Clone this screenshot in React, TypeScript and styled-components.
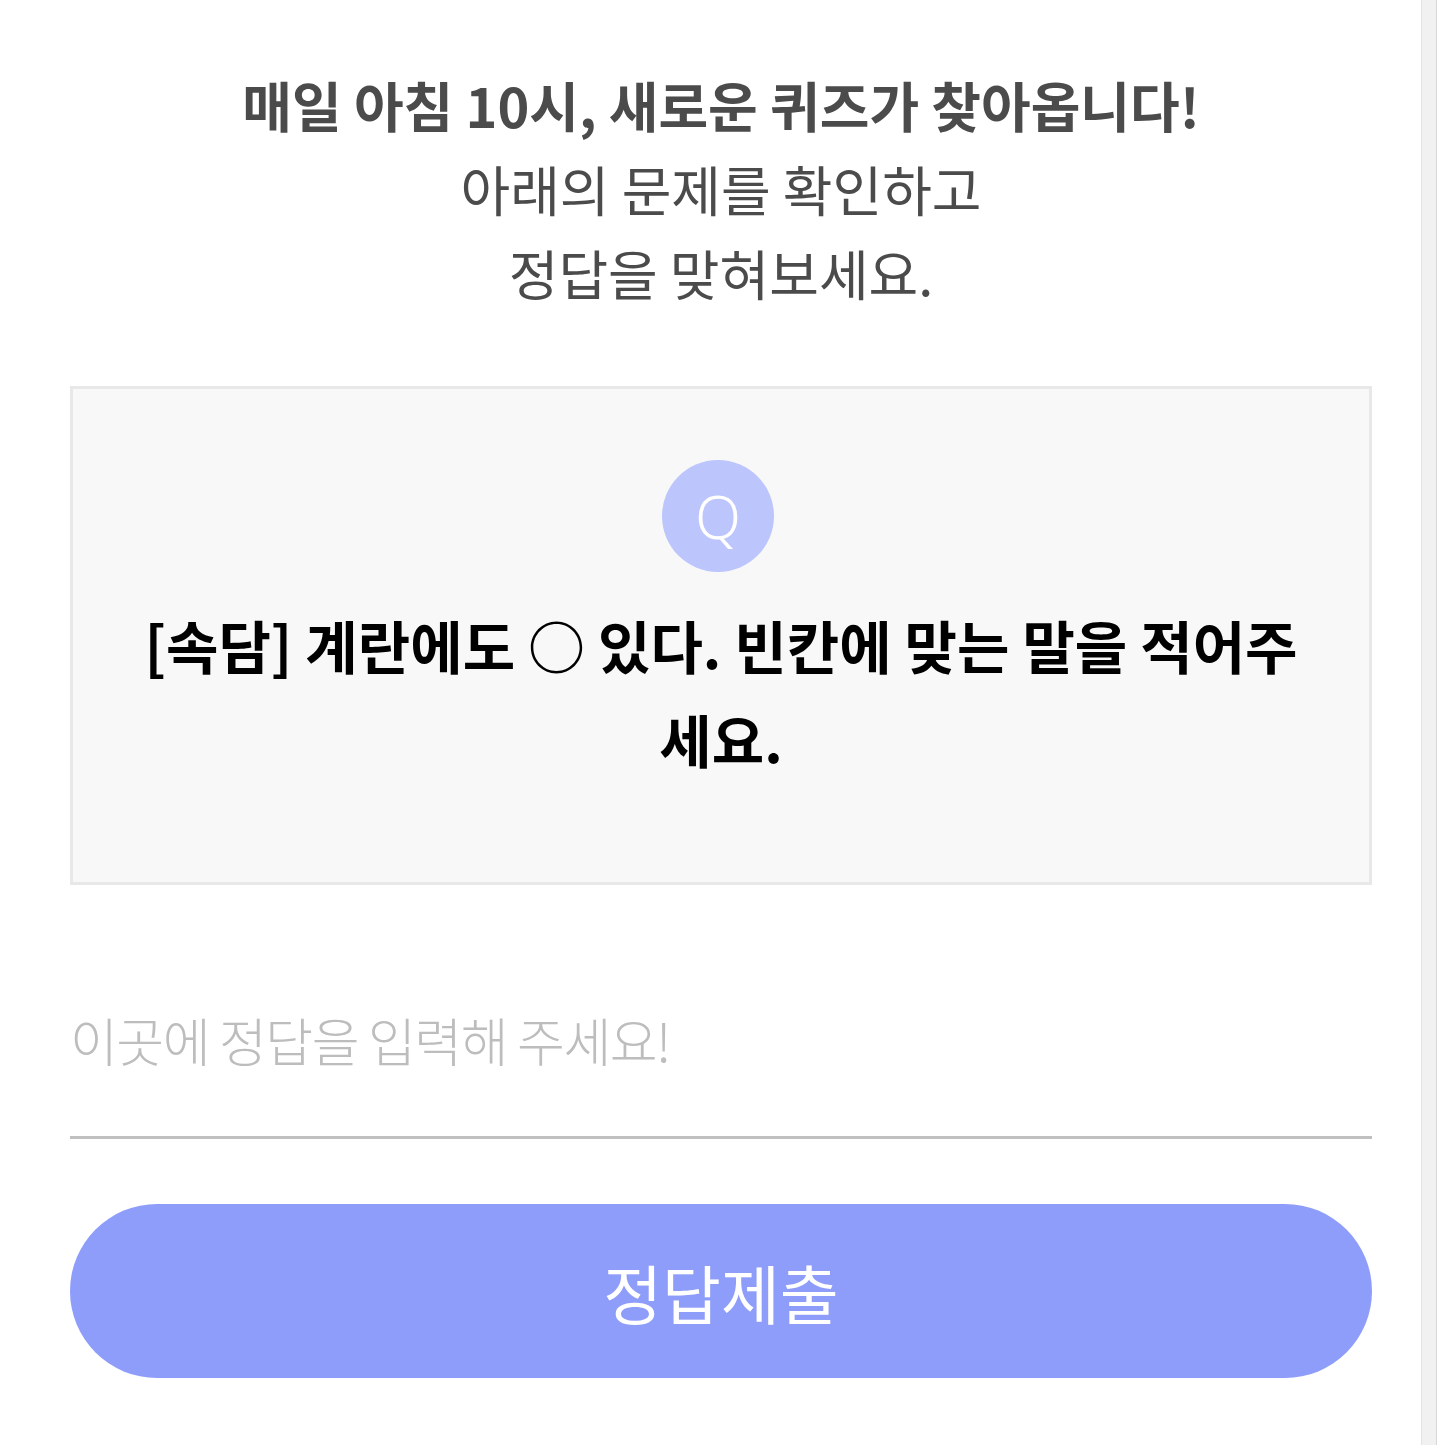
import React, { useState } from 'react';
import styled, { createGlobalStyle } from 'styled-components';

const GlobalStyle = createGlobalStyle`
  html, body {
    margin: 0;
    padding: 0;
    background: #ffffff;
    font-family: "Noto Sans CJK KR", "Noto Sans", sans-serif;
  }
`;

const Page = styled.div`
  display: flex;
  min-height: 1445px;
`;

const Main = styled.main`
  flex: 1;
  padding: 63px 49px 0 70px;
  display: flex;
  flex-direction: column;
  align-items: stretch;
`;

const ScrollTrack = styled.div`
  width: 14px;
  margin-right: 2px;
  background: #f1f1f1;
  border-left: 1px solid #e4e4e4;
  border-right: 1px solid #d8d8d8;
`;

const Intro = styled.div`
  text-align: center;
  color: #4b4b4b;
  font-size: 54px;
  line-height: 84px;
`;

const IntroLine = styled.p<{ $bold?: boolean }>`
  margin: 0;
  font-weight: ${(p) => (p.$bold ? 700 : 400)};
`;

const QuizCard = styled.section`
  margin-top: 71px;
  border: 3px solid #e8e8e8;
  background: #f8f8f8;
  padding: 71px 60px 97px;
  display: flex;
  flex-direction: column;
  align-items: center;
`;

const Badge = styled.div`
  width: 112px;
  height: 112px;
  margin-right: 6px;
  border-radius: 50%;
  background: #bcc5fc;
  color: #ffffff;
  display: flex;
  align-items: center;
  justify-content: center;
  font-family: "Noto Sans", sans-serif;
  font-weight: 300;
  font-size: 60px;
`;

const Question = styled.h2`
  margin: 25px 0 0;
  color: #000000;
  font-size: 57px;
  font-weight: 700;
  line-height: 94px;
  text-align: center;
`;

const AnswerInput = styled.input`
  margin-top: 117px;
  border: none;
  border-bottom: 3px solid #c0c0c0;
  background: transparent;
  padding: 0 0 59px;
  font-family: "Noto Sans CJK KR", "Noto Sans", sans-serif;
  font-size: 52px;
  font-weight: 300;
  color: #333333;
  letter-spacing: -1.5px;
  outline: none;

  &::placeholder {
    color: #bdbdbd;
  }
`;

const SubmitButton = styled.button`
  margin-top: 65px;
  height: 174px;
  border: none;
  border-radius: 87px;
  background: #8e9dfa;
  color: #ffffff;
  font-family: "Noto Sans CJK KR", "Noto Sans", sans-serif;
  font-size: 64px;
  font-weight: 400;
  cursor: pointer;
`;

export default function App() {
  const [answer, setAnswer] = useState('');

  return (
    <>
      <GlobalStyle />
      <Page>
        <Main>
          <Intro>
            <IntroLine $bold>매일 아침 10시, 새로운 퀴즈가 찾아옵니다!</IntroLine>
            <IntroLine>아래의 문제를 확인하고</IntroLine>
            <IntroLine>정답을 맞혀보세요.</IntroLine>
          </Intro>

          <QuizCard>
            <Badge>Q</Badge>
            <Question>[속담] 계란에도 ○ 있다. 빈칸에 맞는 말을 적어주세요.</Question>
          </QuizCard>

          <AnswerInput
            value={answer}
            onChange={(e) => setAnswer(e.target.value)}
            placeholder="이곳에 정답을 입력해 주세요!"
          />
          <SubmitButton type="button">정답제출</SubmitButton>
        </Main>
        <ScrollTrack />
      </Page>
    </>
  );
}
